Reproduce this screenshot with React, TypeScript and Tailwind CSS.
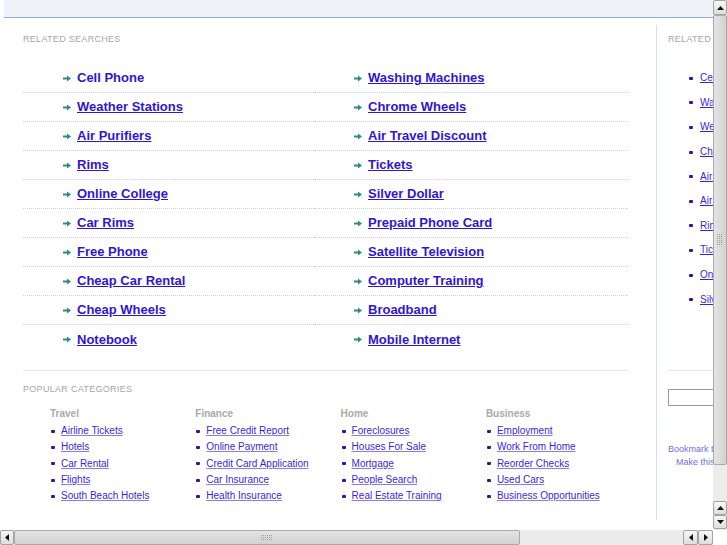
import React from "react";

const leftCol = ["Cell Phone","Weather Stations","Air Purifiers","Rims","Online College","Car Rims","Free Phone","Cheap Car Rental","Cheap Wheels","Notebook"];
const rightCol = ["Washing Machines","Chrome Wheels","Air Travel Discount","Tickets","Silver Dollar","Prepaid Phone Card","Satellite Television","Computer Training","Broadband","Mobile Internet"];
const sideList = ["Cell Phone","Washing Machines","Weather Stations","Chrome Wheels","Air Purifiers","Air Travel Discount","Rims","Tickets","Online College","Silver Dollar"];
const cats: { title: string; items: string[] }[] = [
  { title: "Travel", items: ["Airline Tickets","Hotels","Car Rental","Flights","South Beach Hotels"] },
  { title: "Finance", items: ["Free Credit Report","Online Payment","Credit Card Application","Car Insurance","Health Insurance"] },
  { title: "Home", items: ["Foreclosures","Houses For Sale","Mortgage","People Search","Real Estate Training"] },
  { title: "Business", items: ["Employment","Work From Home","Reorder Checks","Used Cars","Business Opportunities"] },
];

function Arrow() {
  return (
    <svg width="8" height="7" viewBox="0 0 8 7" className="shrink-0">
      <path d="M0 2.5h4V0.5l4 3-4 3V4.5H0z" fill="#2f8a82" />
    </svg>
  );
}

function Grip({ vertical }: { vertical?: boolean }) {
  const dots: React.ReactElement[] = [];
  const cols = vertical ? 3 : 6;
  const rows = vertical ? 6 : 3;
  for (let r = 0; r < rows; r++)
    for (let c = 0; c < cols; c++)
      dots.push(<rect key={r + "-" + c} x={c * 2} y={r * 2} width="1" height="1" fill="#9a9a9a" />);
  return (
    <svg width={cols * 2} height={rows * 2} viewBox={`0 0 ${cols * 2} ${rows * 2}`}>
      {dots}
    </svg>
  );
}

function Btn({ dir, className = "" }: { dir: "up" | "down" | "left" | "right"; className?: string }) {
  const paths: Record<string, string> = {
    up: "M0 4L3.5 0 7 4z",
    down: "M0 0h7L3.5 4z",
    left: "M4 0v7L0 3.5z",
    right: "M0 0v7l4-3.5z",
  };
  const vert = dir === "up" || dir === "down";
  return (
    <div className={`flex items-center justify-center rounded-[2px] border border-[#a3a3a3] bg-gradient-to-b from-[#f7f7f7] to-[#dedede] ${className}`}>
      <svg width={vert ? 7 : 4} height={vert ? 4 : 7} viewBox={vert ? "0 0 7 4" : "0 0 4 7"}>
        <path d={paths[dir]} fill="#111" />
      </svg>
    </div>
  );
}

export default function App() {
  return (
    <div className="w-[727px] h-[545px] overflow-hidden bg-white flex flex-col font-['Liberation_Sans',Arial,sans-serif]">
      <div className="flex h-[530px]">
        {/* page viewport */}
        <div className="w-[713px] h-[530px] overflow-hidden pl-[4px]">
          <div className="w-[900px]">
            <div className="h-[18px] w-[709px] bg-[#eff3f8] border-b border-[#8eabe4]" />
            <div className="flex">
              {/* left panel */}
              <div className="w-[653px] shrink-0 h-[495px] mt-[7px] border-r border-[#d3def2] pl-[19px] pt-[9px]">
                <div className="text-[9px] leading-[11px] tracking-[0.3px] text-[#a6a6a6]">RELATED SEARCHES</div>
                <div className="mt-[19px] w-[605px] grid grid-cols-[291px_314px]">
                  {leftCol.map((l, i) => (
                    <React.Fragment key={l}>
                      <div className={`h-[29px] flex items-center gap-[6px] pl-[40px] ${i < 9 ? "border-b border-dotted border-[#c3d1e8]" : ""}`}>
                        <Arrow />
                        <a href="#" className={`text-[13px] font-bold text-[#3016d2] ${i === 0 ? "" : "underline"}`}>{l}</a>
                      </div>
                      <div className={`h-[29px] flex items-center gap-[6px] pl-[40px] ${i < 9 ? "border-b border-dotted border-[#c3d1e8]" : ""}`}>
                        <Arrow />
                        <a href="#" className="text-[13px] font-bold text-[#3016d2] underline">{rightCol[i]}</a>
                      </div>
                    </React.Fragment>
                  ))}
                </div>
                <div className="mt-[16px] w-[605px] border-t border-[#e2e9f6] pt-[13px]">
                  <div className="text-[9px] leading-[11px] tracking-[0.3px] text-[#a6a6a6]">POPULAR CATEGORIES</div>
                  <div className="mt-[13px] pl-[27px] flex">
                    {cats.map((c) => (
                      <div key={c.title} className="w-[145.3px] shrink-0">
                        <div className="text-[10px] leading-[12px] font-bold text-[#a9a9a9]">{c.title}</div>
                        <div className="mt-[3px]">
                          {c.items.map((it) => (
                            <div key={it} className="flex items-center h-[16.3px]">
                              <span className="ml-[1px] w-[4px] h-[3px] rounded-[1px] bg-[#2a1a9a]" />
                              <a href="#" className="ml-[6px] text-[10px] leading-[12px] text-[#3a1fe0] underline decoration-[#8b7cec]">{it}</a>
                            </div>
                          ))}
                        </div>
                      </div>
                    ))}
                  </div>
                </div>
              </div>
              {/* right column */}
              <div className="w-[200px] shrink-0 pt-[16px] pl-[11px]">
                <div className="text-[9px] leading-[11px] tracking-[0.3px] text-[#a6a6a6]">RELATED SEARCHES</div>
                <div className="mt-[21px]">
                  {sideList.map((s) => (
                    <div key={s} className="h-[24.6px] flex items-center pl-[21px]">
                      <span className="w-[4px] h-[3px] rounded-[1px] bg-[#2a1a9a]" />
                      <a href="#" className="ml-[7px] text-[10px] leading-[12px] text-[#3a1fe0] underline">{s}</a>
                    </div>
                  ))}
                </div>
                <div className="mt-[58px] border-t border-[#e2e9f6]" />
                <div className="mt-[18px] h-[17px] w-[150px] border border-[#9a9a9a] bg-white" />
                <div className="mt-[37px] text-[9px] leading-[12px] text-[#6f6fe0]">Bookmark this page</div>
                <div className="mt-[1px] pl-[8px] text-[9px] leading-[12px] text-[#6f6fe0]">Make this your homepage</div>
              </div>
            </div>
          </div>
        </div>
        {/* vertical scrollbar */}
        <div className="w-[14px] h-[530px] bg-[#ececec] flex flex-col">
          <Btn dir="up" className="h-[15px] w-[14px]" />
          <div className="h-[450px] w-[14px] rounded-[2px] border border-[#a9a9a9] bg-gradient-to-r from-[#e4e4e4] to-[#d2d2d2] flex items-center justify-center">
            <Grip vertical />
          </div>
          <div className="flex-1" />
          <Btn dir="up" className="h-[14px] w-[14px]" />
          <Btn dir="down" className="h-[14px] w-[14px] mb-[1px]" />
        </div>
      </div>
      {/* horizontal scrollbar */}
      <div className="h-[15px] flex">
        <div className="w-[713px] h-[15px] bg-[#ececec] flex">
          <Btn dir="left" className="h-[15px] w-[14px]" />
          <div className="w-[506px] h-[15px] rounded-[2px] border border-[#a9a9a9] bg-gradient-to-b from-[#e4e4e4] to-[#d2d2d2] flex items-center justify-center">
            <Grip />
          </div>
          <div className="flex-1" />
          <Btn dir="left" className="h-[15px] w-[15px]" />
          <Btn dir="right" className="h-[15px] w-[15px]" />
        </div>
        <div className="w-[14px] bg-white" />
      </div>
    </div>
  );
}
